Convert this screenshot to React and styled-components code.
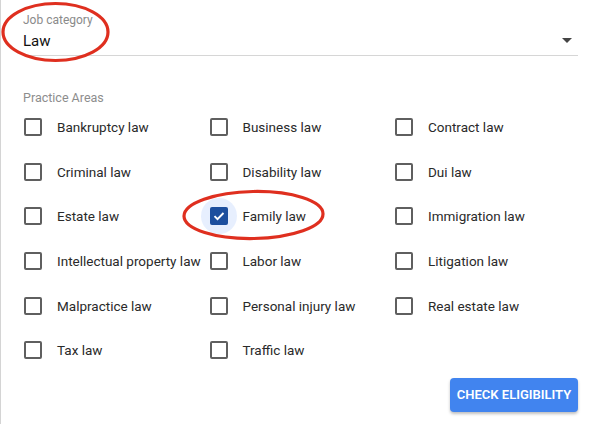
import React from "react"
import styled, { createGlobalStyle } from "styled-components"

const areas = [
  "Bankruptcy law", "Business law", "Contract law",
  "Criminal law", "Disability law", "Dui law",
  "Estate law", "Family law", "Immigration law",
  "Intellectual property law", "Labor law", "Litigation law",
  "Malpractice law", "Personal injury law", "Real estate law",
  "Tax law", "Traffic law",
]

const App = () => {
  return (
    <Page>
      <GlobalStyle />
      <Content>
        <Field>
          <FieldLabel>Job category</FieldLabel>
          <SelectRow>
            <span>Law</span>
            <svg width="24" height="24" viewBox="0 0 24 24">
              <path d="M7 10l5 5 5-5z" fill="#444" />
            </svg>
          </SelectRow>
        </Field>

        <SectionLabel>Practice Areas</SectionLabel>
        <Grid>
          {areas.map(area => {
            const checked = area === "Family law"
            return (
              <Option key={area}>
                <Box checked={checked}>
                  {checked && (
                    <svg width="14" height="14" viewBox="0 0 14 14">
                      <path d="M2.5 7.2l3 3 6-6.2" fill="none" stroke="#fff" strokeWidth="1.9" />
                    </svg>
                  )}
                </Box>
                <OptionText>{area}</OptionText>
              </Option>
            )
          })}
        </Grid>

        <Footer>
          <Button>CHECK ELIGIBILITY</Button>
        </Footer>
      </Content>

      <Marks width="591" height="424" viewBox="0 0 591 424">
        <ellipse cx="55.5" cy="32" rx="52.5" ry="28.5" fill="none" stroke="#df2f1f" strokeWidth="3.2" />
        <ellipse cx="253.5" cy="215" rx="69.5" ry="23.5" fill="none" stroke="#df2f1f" strokeWidth="3.2" transform="rotate(-1 253.5 215)" />
      </Marks>
    </Page>
  )
}

const GlobalStyle = createGlobalStyle`
  body {
    margin: 0;
    background: #fff;
    font-family: Roboto, "Liberation Sans", sans-serif;
  }
`

const Page = styled.div`
  position: relative;
  width: 591px;
  height: 424px;
  border-left: 1px solid #d4d4d4;
  box-sizing: border-box;
  overflow: hidden;
`

const Content = styled.div`
  width: 555px;
  margin-left: 22px;
  padding-top: 13px;
`

const Field = styled.div`
  border-bottom: 1px solid #d6d6d6;
  padding-bottom: 4px;
`

const FieldLabel = styled.div`
  font-size: 12px;
  line-height: 14px;
  color: #8a8a8a;
`

const SelectRow = styled.div`
  margin-top: 4px;
  height: 20px;
  display: flex;
  align-items: center;
  justify-content: space-between;
  font-size: 15px;
  color: #111;

  svg {
    margin-right: -1px;
    margin-top: -2px;
  }
`

const SectionLabel = styled.div`
  margin-top: 35px;
  font-size: 12.5px;
  line-height: 14px;
  color: #8d8d8d;
`

const Grid = styled.div`
  display: grid;
  grid-template-columns: 185.5px 185.5px 1fr;
  grid-auto-rows: 44.6px;
  padding-left: 1px;
`

const Option = styled.div`
  display: flex;
  align-items: center;
  gap: 15px;
`

const Box = styled.span`
  position: relative;
  flex: none;
  width: 18px;
  height: 18px;
  box-sizing: border-box;
  border-radius: 2px;
  display: flex;
  align-items: center;
  justify-content: center;
  border: ${p => (p.checked ? "none" : "2px solid #5f5f5f")};
  background: ${p => (p.checked ? "#1d4f9e" : "transparent")};

  &::before {
    content: "";
    display: ${p => (p.checked ? "block" : "none")};
    position: absolute;
    left: -9px;
    top: -9px;
    width: 36px;
    height: 36px;
    border-radius: 50%;
    background: rgba(66, 133, 244, 0.13);
    z-index: -1;
  }
`

const OptionText = styled.span`
  font-size: 13.5px;
  color: #2a2a2a;
  white-space: nowrap;
`

const Footer = styled.div`
  display: flex;
  justify-content: flex-end;
  margin-top: 5px;
`

const Button = styled.button`
  width: 128px;
  height: 34px;
  border: none;
  border-radius: 4px;
  background: #4184ef;
  color: #fff;
  font-family: Roboto, "Liberation Sans", sans-serif;
  font-size: 13px;
  font-weight: 600;
  padding: 0;
  box-shadow: 0 2px 3px rgba(0, 0, 0, 0.25);
`

const Marks = styled.svg`
  position: absolute;
  left: -1px;
  top: 0;
  pointer-events: none;
`

export default App
